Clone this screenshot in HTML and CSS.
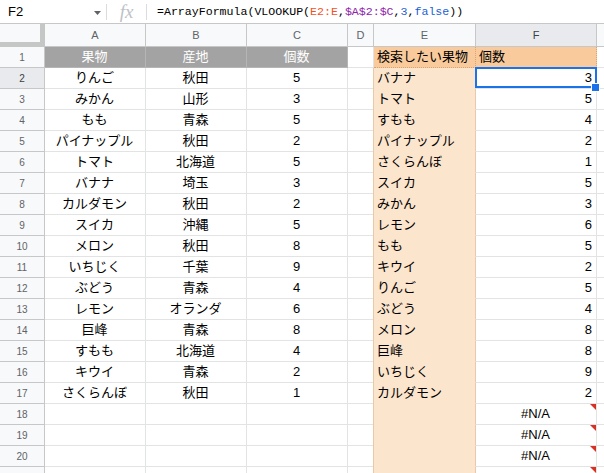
FILE: index.html
```html
<!DOCTYPE html>
<html lang="ja">
<head>
<meta charset="utf-8">
<link rel="stylesheet" href="styles.css">
</head>
<body>
<div class="fbar">
  <div class="namebox">F2</div>
  <div class="caret"><svg width="7" height="4" viewBox="0 0 7 4"><path d="M0 0h7L3.5 4z" fill="#5f6368"/></svg></div>
  <div class="sep"></div>
  <div class="fx">fx</div>
  <div class="sep"></div>
  <div class="formula">=ArrayFormula(VLOOKUP(<span class="r1">E2:E</span>,<span class="r2">$A$2:$C</span>,<span class="num">3</span>,<span class="num">false</span>))</div>
</div>
<div class="sheet">
  <div class="corner"></div><div class="ch">A</div><div class="ch">B</div><div class="ch">C</div><div class="ch">D</div><div class="ch">E</div><div class="ch sel">F</div><div class="ch last"></div>

  <div class="rh">1</div><div class="c hd">果物</div><div class="c hd">産地</div><div class="c hd">個数</div><div class="c"></div><div class="c o1">検索したい果物</div><div class="c o1">個数</div><div class="c last"></div>

  <div class="rh sel">2</div><div class="c ct">りんご</div><div class="c ct">秋田</div><div class="c ct">5</div><div class="c"></div><div class="c o2">バナナ</div><div class="c rt active">3<span class="handle"></span></div><div class="c last"></div>
  <div class="rh">3</div><div class="c ct">みかん</div><div class="c ct">山形</div><div class="c ct">3</div><div class="c"></div><div class="c o2">トマト</div><div class="c rt">5</div><div class="c last"></div>
  <div class="rh">4</div><div class="c ct">もも</div><div class="c ct">青森</div><div class="c ct">5</div><div class="c"></div><div class="c o2">すもも</div><div class="c rt">4</div><div class="c last"></div>
  <div class="rh">5</div><div class="c ct">パイナップル</div><div class="c ct">秋田</div><div class="c ct">2</div><div class="c"></div><div class="c o2">パイナップル</div><div class="c rt">2</div><div class="c last"></div>
  <div class="rh">6</div><div class="c ct">トマト</div><div class="c ct">北海道</div><div class="c ct">5</div><div class="c"></div><div class="c o2">さくらんぼ</div><div class="c rt">1</div><div class="c last"></div>
  <div class="rh">7</div><div class="c ct">バナナ</div><div class="c ct">埼玉</div><div class="c ct">3</div><div class="c"></div><div class="c o2">スイカ</div><div class="c rt">5</div><div class="c last"></div>
  <div class="rh">8</div><div class="c ct">カルダモン</div><div class="c ct">秋田</div><div class="c ct">2</div><div class="c"></div><div class="c o2">みかん</div><div class="c rt">3</div><div class="c last"></div>
  <div class="rh">9</div><div class="c ct">スイカ</div><div class="c ct">沖縄</div><div class="c ct">5</div><div class="c"></div><div class="c o2">レモン</div><div class="c rt">6</div><div class="c last"></div>
  <div class="rh">10</div><div class="c ct">メロン</div><div class="c ct">秋田</div><div class="c ct">8</div><div class="c"></div><div class="c o2">もも</div><div class="c rt">5</div><div class="c last"></div>
  <div class="rh">11</div><div class="c ct">いちじく</div><div class="c ct">千葉</div><div class="c ct">9</div><div class="c"></div><div class="c o2">キウイ</div><div class="c rt">2</div><div class="c last"></div>
  <div class="rh">12</div><div class="c ct">ぶどう</div><div class="c ct">青森</div><div class="c ct">4</div><div class="c"></div><div class="c o2">りんご</div><div class="c rt">5</div><div class="c last"></div>
  <div class="rh">13</div><div class="c ct">レモン</div><div class="c ct">オランダ</div><div class="c ct">6</div><div class="c"></div><div class="c o2">ぶどう</div><div class="c rt">4</div><div class="c last"></div>
  <div class="rh">14</div><div class="c ct">巨峰</div><div class="c ct">青森</div><div class="c ct">8</div><div class="c"></div><div class="c o2">メロン</div><div class="c rt">8</div><div class="c last"></div>
  <div class="rh">15</div><div class="c ct">すもも</div><div class="c ct">北海道</div><div class="c ct">4</div><div class="c"></div><div class="c o2">巨峰</div><div class="c rt">8</div><div class="c last"></div>
  <div class="rh">16</div><div class="c ct">キウイ</div><div class="c ct">青森</div><div class="c ct">2</div><div class="c"></div><div class="c o2">いちじく</div><div class="c rt">9</div><div class="c last"></div>
  <div class="rh">17</div><div class="c ct">さくらんぼ</div><div class="c ct">秋田</div><div class="c ct">1</div><div class="c"></div><div class="c o2">カルダモン</div><div class="c rt">2</div><div class="c last"></div>
  <div class="rh">18</div><div class="c"></div><div class="c"></div><div class="c"></div><div class="c"></div><div class="c o2"></div><div class="c ct err">#N/A</div><div class="c last"></div>
  <div class="rh">19</div><div class="c"></div><div class="c"></div><div class="c"></div><div class="c"></div><div class="c o2"></div><div class="c ct err">#N/A</div><div class="c last"></div>
  <div class="rh">20</div><div class="c"></div><div class="c"></div><div class="c"></div><div class="c"></div><div class="c o2"></div><div class="c ct err">#N/A</div><div class="c last"></div>
  <div class="rh"></div><div class="c"></div><div class="c"></div><div class="c"></div><div class="c"></div><div class="c o2"></div><div class="c ct err"></div><div class="c last"></div>
</div>
</body>
</html>
```
FILE: styles.css
```css
html, body {
  margin: 0;
  padding: 0;
  background: #fff;
  overflow: hidden;
}
body {
  width: 604px;
  height: 473px;
  font-family: "Liberation Sans", Arial, "Noto Sans CJK JP", sans-serif;
  color: #000;
}
.fbar {
  height: 23px;
  border-bottom: 1px solid #c7c7c7;
  display: flex;
  align-items: center;
  font-size: 13px;
}
.namebox {
  width: 86px;
  padding-left: 8px;
  color: #000;
}
.caret {
  width: 12px;
  display: flex;
  align-items: center;
  padding-top: 2px;
}
.sep {
  width: 1px;
  height: 16px;
  background: #dadce0;
}
.fx {
  width: 39px;
  text-align: center;
  font-family: "Liberation Serif", "DejaVu Serif", serif;
  font-style: italic;
  font-size: 19px;
  color: #bdc1c6;
  line-height: 20px;
}
.formula {
  padding-left: 10px;
  font-family: "Liberation Mono", "DejaVu Sans Mono", monospace;
  font-size: 11.6px;
  color: #000;
  white-space: nowrap;
}
.r1 { color: #f4511e; }
.r2 { color: #8e24aa; }
.num { color: #1a5fd6; }

.sheet {
  display: grid;
  grid-template-columns: 45px 101px 101px 101px 26px 102px 121px 7px;
  grid-template-rows: 23px;
  grid-auto-rows: 21px;
  font-size: 13px;
}
.corner {
  background: #f8f9fa;
  box-sizing: border-box;
  border-right: 5px solid #c4c7c5;
  border-bottom: 5px solid #c4c7c5;
}
.ch {
  box-sizing: border-box;
  background: #f8f9fa;
  border-right: 1px solid #c7c7c7;
  border-bottom: 1px solid #c7c7c7;
  color: #5f6368;
  font-size: 11px;
  display: flex;
  align-items: center;
  justify-content: center;
}
.ch.sel { background: #e8eaed; color: #3c4043; }
.ch.last { border-right: none; }
.rh {
  box-sizing: border-box;
  background: #f8f9fa;
  border-right: 1px solid #c7c7c7;
  border-bottom: 1px solid #c7c7c7;
  color: #5f6368;
  font-size: 10px;
  display: flex;
  align-items: center;
  justify-content: center;
}
.rh.sel { background: #e8eaed; color: #3c4043; }
.c {
  box-sizing: border-box;
  border-right: 1px solid #e2e3e3;
  border-bottom: 1px solid #e2e3e3;
  line-height: 20px;
  padding: 0 4px 0 3px;
  white-space: nowrap;
  overflow: visible;
  position: relative;
}
.c.last { border-right: none; }
.ct { text-align: center; }
.rt { text-align: right; }
.hd {
  background: #a3a3a3;
  color: #fff;
  text-align: center;
  border-right-color: #b5b5b5;
  border-bottom-color: #b5b5b5;
}
.o1 {
  background: #f9cb9c;
  border-right: 1px dotted #d7a475;
  border-bottom: 1px dotted #d7a475;
}
.o2 {
  background: #fce5cd;
  border-bottom-color: #fce5cd;
  border-right-color: #e8c9aa;
  box-shadow: -1px 0 0 #e8c9aa;
}
.active::before {
  content: "";
  position: absolute;
  top: -1px;
  left: -1px;
  right: -1px;
  bottom: 0;
  border: 2px solid #1a73e8;
}
.handle {
  position: absolute;
  width: 7px;
  height: 7px;
  right: -4px;
  bottom: -4px;
  background: #1a73e8;
  border: 1px solid #fff;
  z-index: 2;
}
.err::after {
  content: "";
  position: absolute;
  top: 0;
  right: 0;
  border-top: 6px solid #d93025;
  border-left: 6px solid transparent;
}
```
